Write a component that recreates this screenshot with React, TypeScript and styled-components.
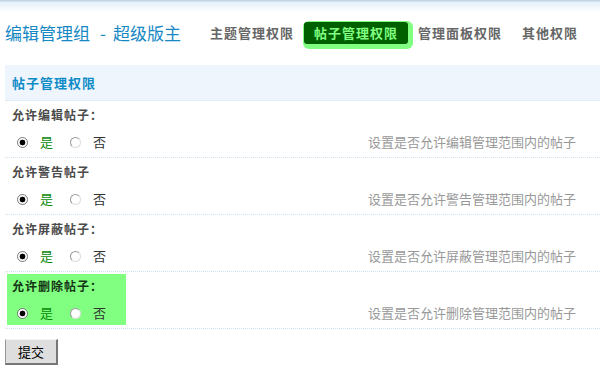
import React from "react";
import styled, { createGlobalStyle } from "styled-components";

const GlobalStyle = createGlobalStyle`
  body {
    margin: 0;
    background: #fff;
    font-family: "Noto Sans CJK SC", "DejaVu Sans", sans-serif;
  }
`;

const Page = styled.div`
  width: 600px;
  height: 373px;
  overflow: hidden;
  background: linear-gradient(to bottom, #c4d4e2 0, #c4d4e2 1px, #e4f1fb 2px, #ffffff 13px);
`;

const TitleBar = styled.div`
  display: flex;
  align-items: center;
  justify-content: space-between;
  height: 65px;
  padding: 0 12px 0 5px;
  box-sizing: border-box;
`;

const Title = styled.h1`
  margin: 0;
  font-size: 17px;
  font-weight: normal;
  color: #1688c4;
  white-space: nowrap;
`;

const Separator = styled.span`
  margin: 0 7px 0 10px;
`;

const Tabs = styled.div`
  display: flex;
  align-items: center;
`;

const Tab = styled.span<{ $active?: boolean }>`
  height: 22px;
  line-height: 22px;
  padding: 0 10px;
  font-size: 13px;
  font-weight: bold;
  letter-spacing: 1px;
  border-radius: 3px;
  color: ${(p) => (p.$active ? "#80ff80" : "#666")};
  background: ${(p) => (p.$active ? "#006000" : "transparent")};
  box-shadow: ${(p) => (p.$active ? "2px 2px 0 3px #80ff80" : "none")};
`;

const Content = styled.div`
  padding-left: 5px;
`;

const SectionHeader = styled.div`
  height: 35px;
  line-height: 35px;
  padding-left: 7px;
  background: #eef5fc;
  border-bottom: 1px dotted #cfe2f2;
  font-size: 13px;
  font-weight: bold;
  letter-spacing: 1px;
  color: #0e8cc8;
`;

const Row = styled.div`
  display: flex;
  padding: 2px 0 3px 2px;
  border-bottom: 1px dotted #cfe2f2;
`;

const Cell = styled.div<{ $highlight?: boolean }>`
  width: 119px;
  padding: 4px 0 4px 5px;
  box-sizing: border-box;
  background: ${(p) => (p.$highlight ? "#80ff80" : "transparent")};
`;

const Label = styled.div<{ $highlight?: boolean }>`
  height: 16px;
  line-height: 16px;
  font-size: 12px;
  font-weight: bold;
  letter-spacing: 1px;
  color: ${(p) => (p.$highlight ? "#143414" : "#4a4a4a")};
`;

const Options = styled.div`
  display: flex;
  align-items: center;
  height: 16px;
  margin-top: 11px;
`;

const Radio = styled.input`
  appearance: none;
  width: 11px;
  height: 11px;
  margin: 0 12px 0 5px;
  border-radius: 50%;
  border: 1px solid #999;
  border-right-color: #ddd;
  border-bottom-color: #ddd;
  background: #fff;
  box-sizing: border-box;

  &:checked {
    background: radial-gradient(circle, #000 0, #000 2.6px, #fff 3.2px);
    border-color: #777;
  }
`;

const OptionText = styled.span<{ $yes?: boolean }>`
  font-size: 13px;
  line-height: 16px;
  margin-right: 12px;
  color: ${(p) => (p.$yes ? "#0a8a0a" : "#333")};
`;

const Desc = styled.div`
  margin-left: auto;
  align-self: flex-end;
  margin-bottom: 4px;
  margin-right: 24px;
  height: 16px;
  line-height: 16px;
  font-size: 13px;
  color: #999;
`;

const SubmitButton = styled.button`
  margin-top: 10px;
  width: 53px;
  height: 26px;
  padding: 0;
  font-family: "Noto Sans CJK SC", sans-serif;
  font-size: 13px;
  color: #000;
  background: #dedede;
  border-style: solid;
  border-width: 1px 2px 2px 1px;
  border-color: #f2f2f2 #777 #777 #999;
`;

const permissions = [
  { label: "允许编辑帖子：", desc: "设置是否允许编辑管理范围内的帖子" },
  { label: "允许警告帖子", desc: "设置是否允许警告管理范围内的帖子" },
  { label: "允许屏蔽帖子：", desc: "设置是否允许屏蔽管理范围内的帖子" },
  { label: "允许删除帖子：", desc: "设置是否允许删除管理范围内的帖子", highlight: true },
];

const tabs = ["主题管理权限", "帖子管理权限", "管理面板权限", "其他权限"];

const App = () => {
  return (
    <Page>
      <GlobalStyle />
      <TitleBar>
        <Title>
          编辑管理组<Separator>-</Separator>超级版主
        </Title>
        <Tabs>
          {tabs.map((t) => (
            <Tab key={t} $active={t === "帖子管理权限"}>
              {t}
            </Tab>
          ))}
        </Tabs>
      </TitleBar>
      <Content>
        <SectionHeader>帖子管理权限</SectionHeader>
        {permissions.map((p, i) => (
          <Row key={i}>
            <Cell $highlight={p.highlight}>
              <Label $highlight={p.highlight}>{p.label}</Label>
              <Options>
                <Radio type="radio" name={`perm${i}`} defaultChecked />
                <OptionText $yes>是</OptionText>
                <Radio type="radio" name={`perm${i}`} />
                <OptionText>否</OptionText>
              </Options>
            </Cell>
            <Desc>{p.desc}</Desc>
          </Row>
        ))}
        <SubmitButton>提交</SubmitButton>
      </Content>
    </Page>
  );
};

export default App;
